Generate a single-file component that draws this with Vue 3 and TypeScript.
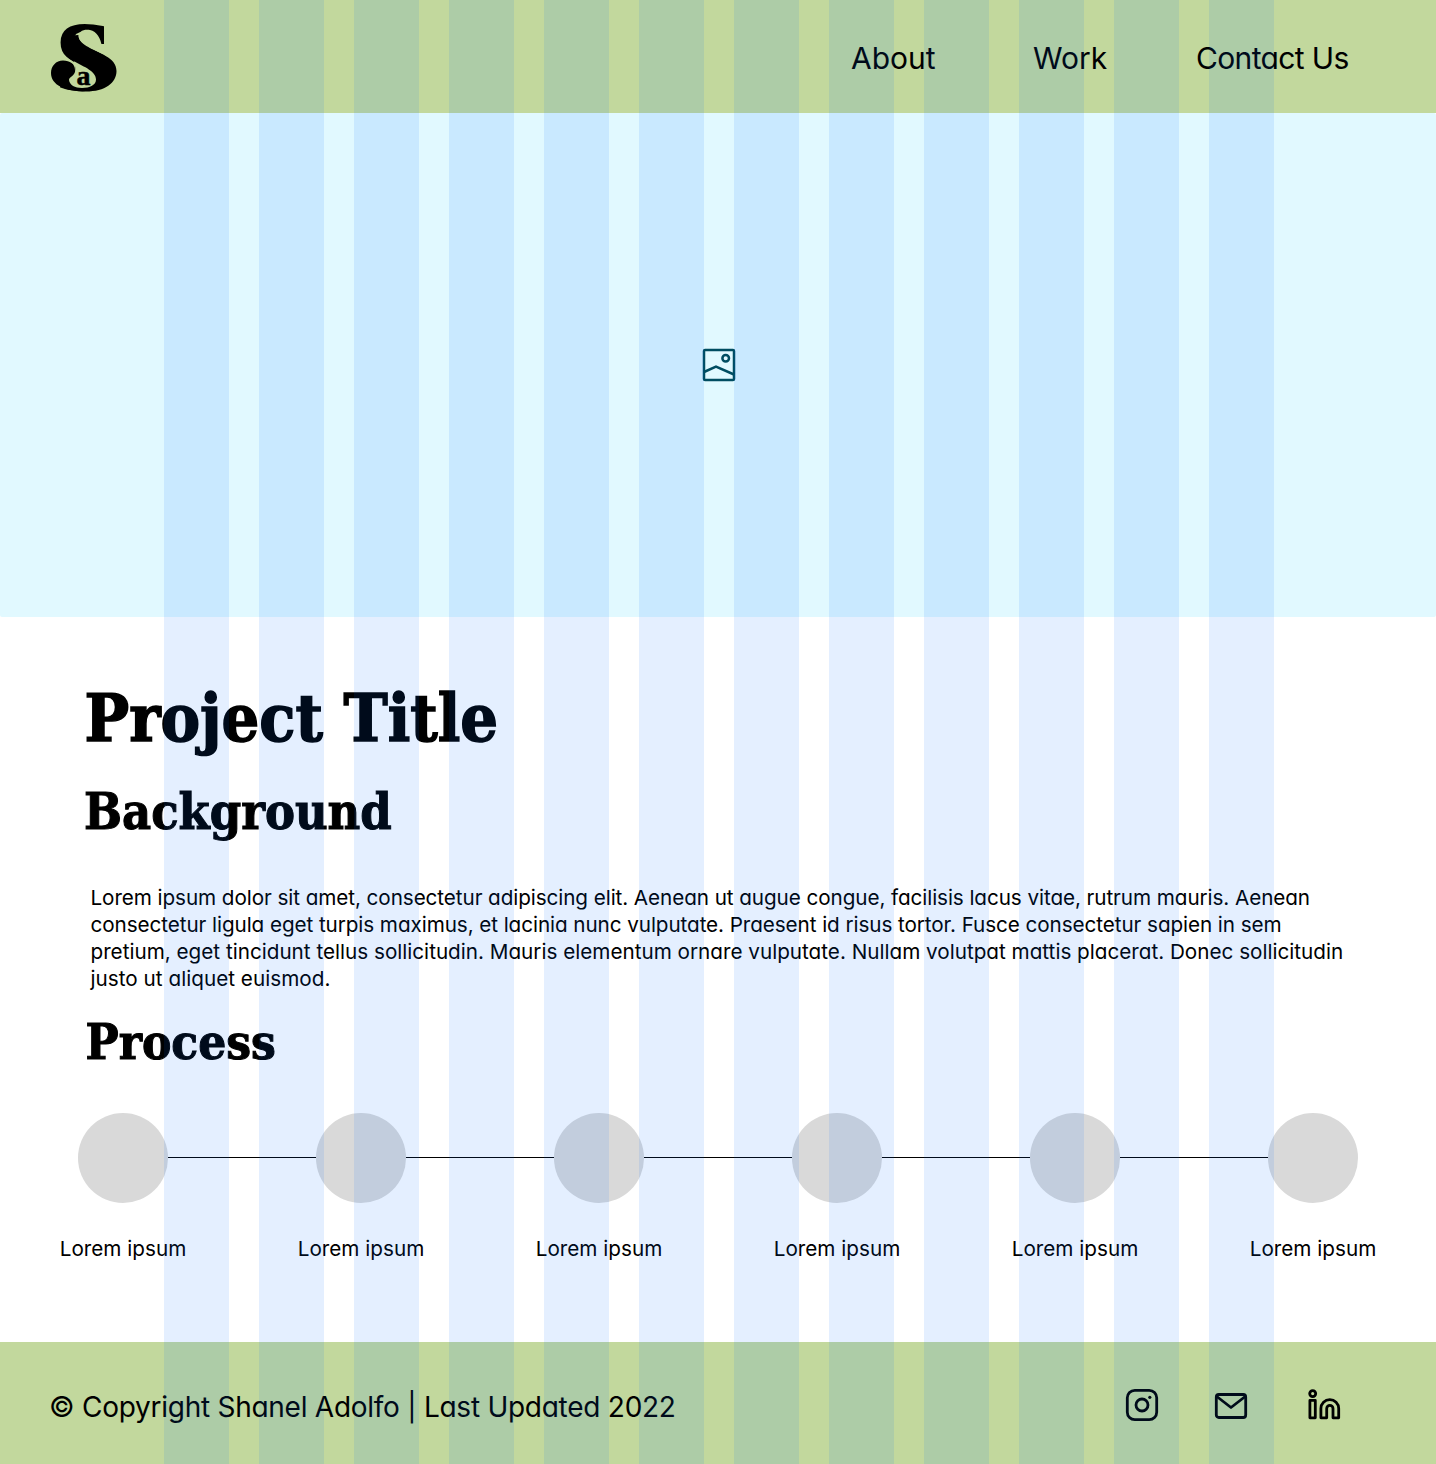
<script setup lang="ts">
interface TextRun {
  text: string
  spacing: number
}

const columns = 12

const nav = [
  { label: 'About', cls: 'about' },
  { label: 'Work', cls: 'work' },
  { label: 'Contact Us', cls: 'contact' },
]

const background: TextRun[] = [
  { text: 'Lorem ipsum dolor sit amet, consectetur adipiscing elit. Aenean ut augue congue, facilisis lacus vitae, rutrum mauris. Aenean', spacing: -0.08 },
  { text: 'consectetur ligula eget turpis maximus, et lacinia nunc vulputate. Praesent id risus tortor. Fusce consectetur sapien in sem', spacing: -0.08 },
  { text: 'pretium, eget tincidunt tellus sollicitudin. Mauris elementum ornare vulputate. Nullam volutpat mattis placerat. Donec sollicitudin', spacing: -0.005 },
  { text: 'justo ut aliquet euismod.', spacing: 0.02 },
]

const steps: string[] = Array.from({ length: 6 }, () => 'Lorem ipsum')
</script>

<template>
  <div class="page">
    <header class="header">
      <svg class="logo" width="68" height="70" viewBox="50 23 68 70" role="img" aria-label="Shanel Adolfo">
        <text class="logo-s" transform="translate(56.5 89) scale(1.02 1)" x="0" y="0">S</text>
        <path d="M75 70C75 64 70 60.500 63 60.500C56 60.500 51 66 51 73C51 85 65 91.500 86 91.500C105 91.500 116.500 83 116.500 71C116.500 57 99 54 86 45C80 41 78.500 39 78.500 35L63 36C59 50 66 57 75 62.500Z" />
        <path d="M79 38C77.500 31 84 29 90 30C97 31.500 100.500 38 102 46.500L106 46.500L107 56C98 51 81 46 79 38Z" fill="#c2d89d" />
        <path d="M74.500 61.500C84 67 96 71 96 79.500C96 85 90 88 82 88C75 88 69.500 85 69 80C69 77 73 77 75 72C75.500 68 75.500 65 73 62Z" fill="#c2d89d" />
        <text class="logo-a" x="76.500" y="84.500">a</text>
      </svg>
      <nav class="nav">
        <a v-for="n in nav" :key="n.label" :class="n.cls">{{ n.label }}</a>
      </nav>
    </header>

    <section class="hero">
      <svg width="34" height="34" viewBox="702 348 34 34" fill="none" stroke="#004d61" stroke-width="2.500">
        <rect x="704" y="350" width="30" height="30" rx="1" />
        <circle cx="725.700" cy="358.300" r="3.300" />
        <path d="M704 372L716 366.500L734 374.500" />
      </svg>
    </section>

    <main class="main">
      <h1>Project Title</h1>
      <h2>Background</h2>
      <p class="copy">
        <span v-for="(line, i) in background" :key="i" :style="{ letterSpacing: line.spacing + 'px' }">{{ line.text }}</span>
      </p>
      <h2 class="process">Process</h2>
      <div class="track">
        <template v-for="(s, i) in steps" :key="i">
          <i v-if="i > 0" class="line"></i>
          <i class="dot"></i>
        </template>
      </div>
      <div class="labels">
        <span v-for="(s, i) in steps" :key="i">{{ s }}</span>
      </div>
    </main>

    <footer class="footer">
      <span class="copyright">© Copyright Shanel Adolfo | Last Updated 2022</span>
      <div class="social">
        <svg width="34" height="34" viewBox="0 0 34 34" fill="none" stroke="#000" stroke-width="2.800">
          <rect x="2.300" y="2.300" width="29.400" height="29.400" rx="7.500" />
          <circle cx="17" cy="17" r="6" />
          <circle cx="24.800" cy="9.300" r="1.600" fill="#000" stroke="none" />
        </svg>
        <svg width="34" height="34" viewBox="0 0 34 34" fill="none" stroke="#000" stroke-width="2.800" stroke-linejoin="round">
          <rect x="2.300" y="6.500" width="29.400" height="23" rx="2.500" />
          <path d="M2.800 8.500L17 19.500L31.200 8.500" />
        </svg>
        <svg width="34" height="34" viewBox="0 0 34 34" fill="none" stroke="#000" stroke-width="2.800" stroke-linejoin="round">
          <circle cx="5.700" cy="5.600" r="3" />
          <rect x="2.900" y="12.400" width="5.400" height="17.400" />
          <path d="M13.900 29.800V20.500A8.900 8.900 0 0 1 31.700 20.500V29.800H26V20.500A3.150 3.150 0 0 0 19.700 20.500V29.800Z" />
        </svg>
      </div>
    </footer>

    <div class="grid-overlay" aria-hidden="true">
      <i v-for="c in columns" :key="c"></i>
    </div>
  </div>
</template>

<style>
body {
  margin: 0;
  background: #fff;
}
</style>

<style scoped>
.page {
  position: relative;
  width: 1436px;
  height: 1464px;
  overflow: hidden;
  display: flex;
  flex-direction: column;
  color: #000;
  font-family: Inter, "Noto Sans", sans-serif;
  font-feature-settings: "cv11";
  white-space: nowrap;
}
.header {
  box-sizing: border-box;
  height: 113px;
  flex: none;
  display: flex;
  align-items: flex-start;
  justify-content: space-between;
  padding: 23px 87px 0 50px;
  background: #c2d89d;
}
.logo {
  display: block;
  overflow: visible;
}
.logo-s {
  font: bold 96px "Liberation Serif", serif;
  stroke: #000;
  stroke-width: 3px;
}
.logo-a {
  font: bold 28px "Liberation Serif", serif;
  stroke: #000;
  stroke-width: 0.5px;
}
.nav {
  display: flex;
  font-size: 30px;
  line-height: 36px;
  padding-top: 17px;
}
.about {
  width: 182px;
}
.work {
  width: 163px;
}
.contact {
  width: 153px;
  letter-spacing: -0.65px;
}
.hero {
  height: 504px;
  flex: none;
  display: flex;
  justify-content: center;
  align-items: center;
  padding-left: 2px;
  box-sizing: border-box;
  border-radius: 2px;
  background: #e1f9ff;
}
.main {
  height: 725px;
  box-sizing: border-box;
  flex: none;
  padding-top: 62px;
}
h1,
h2 {
  margin: 0;
  font-family: "DejaVu Serif Condensed", "DejaVu Serif", serif;
  font-stretch: condensed;
  font-weight: bold;
  -webkit-text-stroke: 1px #000;
}
h1 {
  font-size: 66px;
  line-height: 79px;
  padding-left: 84.5px;
  -webkit-text-stroke-width: 1.5px;
}
h2 {
  margin-top: 24px;
  font-size: 50px;
  line-height: 60px;
  padding-left: 84px;
}
.process {
  margin-top: 20px;
  font-size: 49px;
  padding-left: 85.5px;
}
.copy {
  margin: 42px 0 0;
  padding-left: 90.5px;
  font-size: 20.7px;
  line-height: 27px;
}
.copy span {
  display: block;
}
.track {
  display: flex;
  align-items: center;
  margin: 41px 0 0 78px;
}
.dot {
  width: 90px;
  height: 90px;
  border-radius: 50%;
  background: #d9d9d9;
}
.line {
  width: 148px;
  height: 1px;
  margin-bottom: 1px;
  background: #000;
}
.labels {
  display: grid;
  grid-template-columns: repeat(6, 238px);
  margin: 32px 0 0 4px;
  font-size: 20.7px;
  line-height: 28px;
  text-align: center;
}
.footer {
  height: 122px;
  flex: none;
  box-sizing: border-box;
  display: flex;
  justify-content: space-between;
  align-items: flex-start;
  padding: 46px 95px 0 49px;
  background: #c2d89d;
}
.copyright {
  font-size: 28px;
  line-height: 38px;
  letter-spacing: -0.26px;
}
.social {
  display: flex;
  width: 216px;
  justify-content: space-between;
}
.social svg:nth-child(2) {
  margin-right: 4px;
}
.grid-overlay {
  position: absolute;
  inset: 0 0 0 164px;
  display: flex;
  gap: 30px;
  pointer-events: none;
}
.grid-overlay i {
  width: 65px;
  background: rgba(0, 100, 255, 0.106);
}
</style>
